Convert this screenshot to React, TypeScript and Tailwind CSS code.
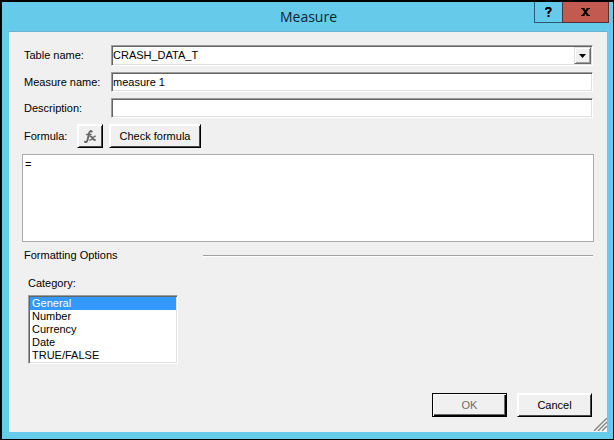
import React, { useState } from 'react';

const CATEGORIES = ['General', 'Number', 'Currency', 'Date', 'TRUE/FALSE'];

const sunken =
  'border border-t-[#9d9d9d] border-l-[#9d9d9d] border-b-white border-r-white shadow-[inset_1px_1px_0_#646464,inset_-1px_-1px_0_#e0e0e0]';

const raised =
  'border border-t-white border-l-white border-b-black border-r-black bg-[#f0f0f0] shadow-[inset_1px_1px_0_#ffffff,inset_-1px_-1px_0_#4a4a4a]';

const TitleBar = () => (
  <header className="grid grid-cols-[1fr_auto_1fr] h-[29px] bg-[#66caea]">
    <h1 className="col-start-2 self-center pl-[2px] font-['Open_Sans',sans-serif] text-sm text-[#0c2530]">Measure</h1>
    <div className="flex justify-end pr-1">
      <button
        type="button"
        aria-label="Help"
        className="flex items-center justify-center w-[28px] h-[21px] border border-r-0 border-t-0 border-[#2b5b6e]"
      >
        <svg width="7" height="10" viewBox="0 0 7 10" fill="none" stroke="#000" strokeWidth="2">
          <path d="M1 3V2L2 1H4.6L5.6 2V3.4L3.5 5.2V7" />
          <path d="M3.5 8V10" />
        </svg>
      </button>
      <button
        type="button"
        aria-label="Close"
        className="flex items-center justify-center w-[47px] h-[21px] border border-t-0 border-[#50333a] bg-[#c35a50]"
      >
        <svg width="9" height="8" viewBox="0 0 9 8" fill="none" stroke="#000">
          <path d="M2 0.5L7 7.5M7 0.5L2 7.5" strokeWidth="2" />
          <path d="M0 0.5H3.5M5.5 0.5H9M0 7.5H3.5M5.5 7.5H9" />
        </svg>
      </button>
    </div>
  </header>
);

const App = () => {
  const [measureName, setMeasureName] = useState('measure 1');
  const [description, setDescription] = useState('');
  const [formula, setFormula] = useState('=');
  const [category, setCategory] = useState('General');

  return (
    <div className="min-h-screen flex flex-col border-t-2 border-l-2 border-r border-b border-black bg-[#66caea] font-['Liberation_Sans',Arial,sans-serif] text-[11px] leading-[13px] text-black">
      <TitleBar />
      <form
        className="relative flex-grow flex flex-col ml-[7px] mr-[6px] mb-[7px] pt-[13px] px-[13px] pb-[15px] border-t border-[#6fb1cc] bg-[#f0f0f0]"
        onSubmit={(e) => e.preventDefault()}
      >
        <div className="grid grid-cols-[87px_1fr] items-center gap-y-[6px] pl-[2px] pr-px">
          <label htmlFor="table">Table name:</label>
          <div className={`relative h-[21px] bg-white ${sunken}`}>
            <select id="table" className="block w-full h-[18px] pl-[1px] appearance-none bg-transparent outline-none">
              <option>CRASH_DATA_T</option>
            </select>
            <span className="pointer-events-none absolute right-px top-px bottom-px flex items-center justify-center w-[17px] border border-t-[#e3e3e3] border-l-[#e3e3e3] border-b-[#696969] border-r-[#696969] bg-[#f0f0f0] shadow-[inset_1px_1px_0_#ffffff,inset_-1px_-1px_0_#a0a0a0]">
              <svg width="7" height="4" viewBox="0 0 7 4">
                <path d="M0 0H7L3.5 4Z" fill="#000" />
              </svg>
            </span>
          </div>
          <label htmlFor="name">Measure name:</label>
          <input
            id="name"
            className={`h-5 px-px bg-white outline-none ${sunken}`}
            value={measureName}
            onChange={(e) => setMeasureName(e.target.value)}
          />
          <label htmlFor="description">Description:</label>
          <input
            id="description"
            className={`h-5 px-px bg-white outline-none ${sunken}`}
            value={description}
            onChange={(e) => setDescription(e.target.value)}
          />
        </div>

        <div className="flex items-center mt-[6px] pl-[2px]">
          <label htmlFor="formula" className="w-[53px]">Formula:</label>
          <button type="button" aria-label="Insert function" className={`flex items-center justify-center w-[26px] h-6 ${raised}`}>
            <svg width="12" height="13" viewBox="0 0 12 13" fill="none" stroke="#666" strokeLinecap="round">
              <path d="M7.8 1.6C6.8 0.5 5.6 1.2 5.2 3L3.6 9.8C3.1 11.9 2 12.6 0.9 11.7" strokeWidth="1.9" />
              <path d="M2.5 4.5H7" strokeWidth="1.4" />
              <path d="M6.4 6.4C8.4 5.8 8.4 10.4 11 9.9" strokeWidth="1.9" />
              <path d="M11.2 6.2C9.6 6 8.4 10.4 6 10" strokeWidth="1.4" />
            </svg>
          </button>
          <button type="button" className={`ml-[6px] w-[92px] h-6 ${raised}`}>Check formula</button>
        </div>

        <textarea
          id="formula"
          className="block w-full h-[88px] mt-[6px] px-[2px] py-[3px] border border-[#aaaaaa] bg-white resize-none outline-none"
          value={formula}
          onChange={(e) => setFormula(e.target.value)}
        />

        <fieldset>
          <div className="flex items-center mt-[7px] pl-[2px] pr-px">
            <h2 className="w-[179px]">Formatting Options</h2>
            <div className="flex-grow h-[2px] border-t border-[#a0a0a0] bg-white" />
          </div>
          <div className="flex flex-col items-start mt-[15px] pl-[6px]">
            <label htmlFor="category">Category:</label>
            <select
              id="category"
              size={5}
              className={`block w-[150px] h-[69px] mt-[5px] p-px bg-white outline-none overflow-hidden ${sunken}`}
              value={category}
              onChange={(e) => setCategory(e.target.value)}
            >
              {CATEGORIES.map((name) => (
                <option
                  key={name}
                  className="block h-[13px] min-h-0 px-[2px] py-0 leading-[13px] checked:bg-linear-to-r checked:from-[#3399ff] checked:to-[#3399ff] checked:[-webkit-text-fill-color:#fff]"
                >
                  {name}
                </option>
              ))}
            </select>
          </div>
        </fieldset>

        <div className="flex justify-end gap-[10px] mt-auto pr-[2px]">
          <button type="submit" disabled className="w-[75px] h-6 border border-black bg-[#f0f0f0] text-[#6d6d6d] shadow-[inset_1px_1px_0_#ffffff,inset_-1px_-1px_0_#000000,inset_-2px_-2px_0_#696969]">
            OK
          </button>
          <button type="button" className={`w-[75px] h-6 ${raised}`}>Cancel</button>
        </div>

        <svg className="absolute right-0 bottom-px" width="13" height="13" viewBox="0 0 13 13" stroke="#808080" strokeWidth="1.4">
          <path d="M1.2 13L13 1.2M5.2 13L13 5.2M9.2 13L13 9.2" stroke="#fff" />
          <path d="M0 13L13 0M4 13L13 4M8 13L13 8" />
        </svg>
      </form>
    </div>
  );
};

export default App;
